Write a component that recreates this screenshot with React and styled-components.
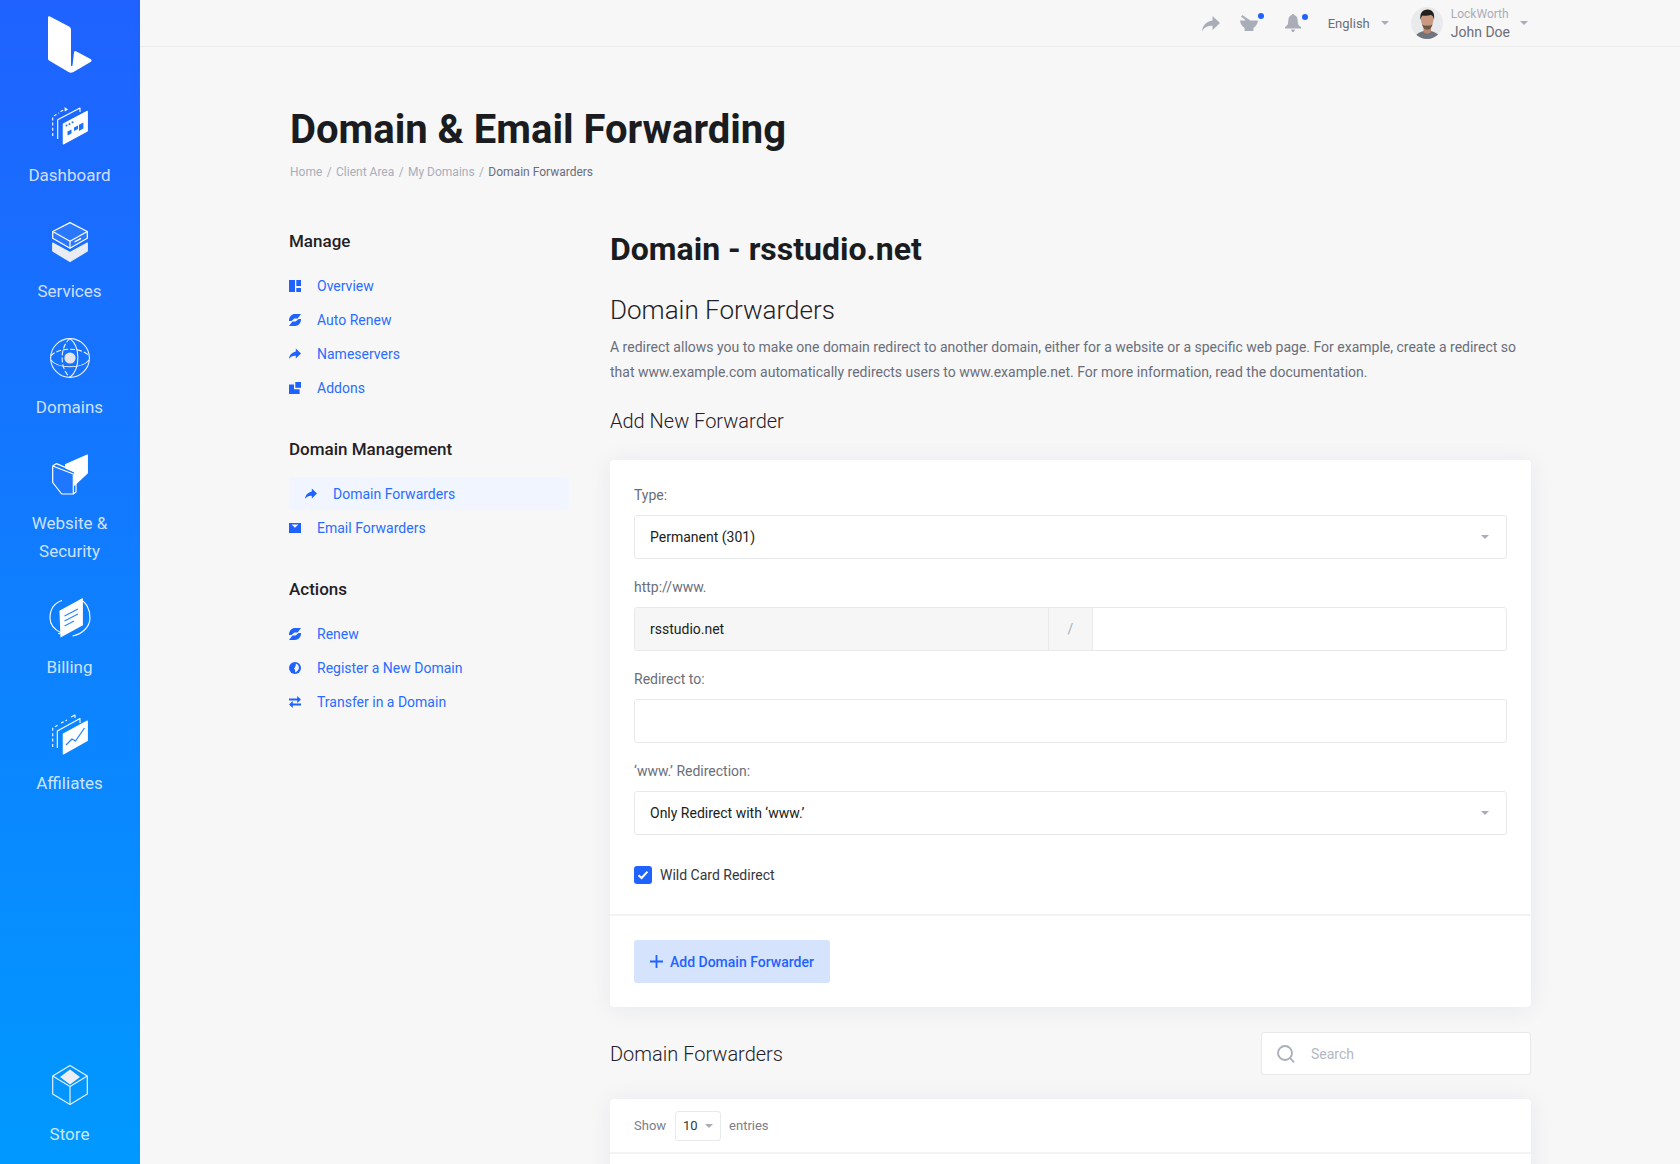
import React from 'react';
import styled, { createGlobalStyle } from 'styled-components';

const Global = createGlobalStyle`
  html, body { margin: 0; padding: 0; height: 1164px; overflow: hidden; background: #f7f7f8; }
  body { font-family: Roboto, "Liberation Sans", sans-serif; color: #1a1c20; }
  * { box-sizing: border-box; }
`;

const Shell = styled.div`display: flex; height: 1164px; overflow: hidden;`;
const Sidebar = styled.nav`
  width: 140px; flex: none; height: 1164px; display: flex; flex-direction: column; align-items: center;
  padding: 16px 0 16px; background: linear-gradient(180deg, #1f62ff 0%, #0099ff 100%);
`;
const LogoBox = styled.div`width: 46px; height: 57px; margin-bottom: 33px; svg { display: block; }`;
const SideList = styled.div`display: flex; flex-direction: column; gap: 33px; width: 100%; flex: 1;`;
const SideSpacer = styled.div`flex: 1;`;
const SideItem = styled.a`display: flex; flex-direction: column; align-items: center; width: 100%;`;
const SideIcon = styled.div`width: 40px; height: 40px; margin-bottom: 15px; svg { display: block; overflow: visible; }`;
const SideLabel = styled.span`font-size: 17px; line-height: 28px; color: rgba(255,255,255,.8); text-align: center; width: 100px; padding-right: 1px;`;

const Main = styled.div`flex: 1; min-width: 0; display: flex; flex-direction: column;`;
const Topbar = styled.header`
  height: 47px; flex: none; border-bottom: 1px solid #eeeeef; background: #f7f7f8; display: flex; align-items: center;
  justify-content: flex-end; padding-right: 152px; position: relative;
`;
const TopIcon = styled.div`position: relative; display: flex; margin-right: ${p => p.$mr}px; svg { display: block; }`;
const Dot = styled.i`position: absolute; width: 6px; height: 6px; border-radius: 50%; background: #1f62ff; top: ${p => p.$top}px; right: ${p => p.$right}px;`;
const Lang = styled.span`font-size: 13px; color: #6a6e79; margin-right: 11px;`;
const Caret = styled.i`display: block; width: 0; height: 0; border-left: 4px solid transparent; border-right: 4px solid transparent; border-top: 4px solid ${p => p.$c || '#a9adb8'};`;
const LangWrap = styled.div`display: flex; align-items: center; margin-right: 22px;`;
const Avatar = styled.div`width: 32px; height: 32px; border-radius: 50%; overflow: hidden; margin-right: 8px; svg { display: block; }`;
const User = styled.div`display: flex; flex-direction: column; margin-right: 10px; padding-top: 3px;`;
const Company = styled.span`font-size: 12px; line-height: 14px; color: #a9adb8;`;
const UserName = styled.span`font-size: 14px; line-height: 20px; color: #6a6e79; margin-top: 1px;`;

const Content = styled.main`padding: 59px 0 0 149px; width: 1391px;`;
const Title = styled.h1`margin: 0 0 0 1px; font-size: 40px; line-height: 48px; font-weight: 700; color: #1a1c20;`;
const Crumbs = styled.div`display: flex; gap: 4.4px; margin: 8px 0 0 1px; font-size: 12px; line-height: 20px; color: #a9adb8;`;
const CrumbNow = styled.span`color: #6a6e79;`;
const Columns = styled.div`display: grid; grid-template-columns: 280px 921px; column-gap: 41px; margin-top: 47px;`;
const Aside = styled.aside`display: flex; flex-direction: column; gap: 32px;`;
const NavGroup = styled.section`display: flex; flex-direction: column;`;
const NavTitle = styled.h3`margin: 0 0 16px; font-size: 17px; line-height: 24px; font-weight: 500; color: #1f2126;`;
const NavRow = styled.a`
  display: flex; align-items: center; height: 33px; margin-bottom: 1px; border-radius: 4px; font-size: 14px; color: #2a6cff;
  padding-left: ${p => (p.$active ? '16px' : '0')};
  background: ${p => (p.$active ? '#f0f5ff' : 'transparent')};
  svg { flex: none; margin-right: 16px; display: block; }
`;

const Right = styled.div`display: flex; flex-direction: column;`;
const H2 = styled.h2`margin: 0; font-size: 32px; line-height: 40px; font-weight: 700; color: #1a1c20;`;
const H3 = styled.h3`margin: 23px 0 0; font-size: 26px; line-height: 36px; font-weight: 300; color: #1f2126;`;
const Para = styled.p`margin: 7px 0 0; font-size: 14px; line-height: 25px; color: #6a6e79;`;
const H4 = styled.h4`margin: ${p => p.$mt ?? 22}px 0 0; font-size: 20px; line-height: 28px; font-weight: 300; color: #1f2126;`;
const Card = styled.div`background: #fff; border-radius: 4px; box-shadow: 0 2px 24px rgba(30,40,60,.07); margin-top: ${p => p.$mt}px;`;
const Fields = styled.div`padding: 25px 24px 0; display: flex; flex-direction: column;`;
const Label = styled.label`font-size: 14px; line-height: 20px; color: #6a6e79; margin-bottom: 10px;`;
const Field = styled.div`
  height: 44px; border: 1px solid #e8e9eb; border-radius: 3px; margin-bottom: 18px; display: flex; align-items: center;
  justify-content: space-between; padding: 0 ${p => (p.$select ? '17px' : '15px')} 0 15px; font-size: 14px; color: #1a1c20; background: #fff;
`;
const Group = styled.div`height: 44px; border: 1px solid #e8e9eb; border-radius: 3px; margin-bottom: 18px; display: flex; overflow: hidden; font-size: 14px;`;
const GroupStatic = styled.div`width: 413px; background: #f6f6f7; display: flex; align-items: center; padding-left: 15px; color: #1a1c20;`;
const GroupSlash = styled.div`width: 45px; background: #f6f6f7; border-left: 1px solid #e8e9eb; border-right: 1px solid #e8e9eb; display: flex; align-items: center; justify-content: center; color: #a9adb8;`;
const CheckRow = styled.div`display: flex; align-items: center; gap: 8px; margin-top: 13px; padding-bottom: 30px; font-size: 14px; color: #33363c;`;
const CheckBox = styled.span`width: 18px; height: 18px; border-radius: 3px; background: #1f62ff; display: flex; align-items: center; justify-content: center;`;
const Footer = styled.div`border-top: 2px solid #f3f3f4; padding: 24px;`;
const Button = styled.button`
  height: 43px; width: 196px; border: 0; border-radius: 3px; background: #d5e3fd; color: #1f62ff; font: 500 14px Roboto, sans-serif;
  display: flex; align-items: center; padding: 0 0 0 16px; gap: 7px;
`;
const SectionHead = styled.div`display: flex; align-items: center; justify-content: space-between; margin-top: 25px;`;
const Search = styled.div`
  width: 270px; height: 43px; background: #fff; border: 1px solid #e8e9eb; border-radius: 3px; display: flex; align-items: center;
  padding-left: 15px; gap: 16px; font-size: 14px; color: #b4b8c2;
`;
const ShowRow = styled.div`height: 55px; display: flex; align-items: center; padding-left: 24px; font-size: 13px; color: #7a7e89; border-bottom: 2px solid #f3f3f4;`;
const SmallSelect = styled.div`width: 46px; height: 30px; margin: 0 8px 0 9px; border: 1px solid #e8e9eb; border-radius: 3px; display: flex; align-items: center; gap: 7px; padding-left: 7px; color: #33363c;`;
const TableArea = styled.div`height: 400px;`;

const Svg = ({ children }) => <svg width="12" height="12" viewBox="0 0 12 12">{children}</svg>;
const B = '#1f62ff';

const IcOverview = () => <Svg><g fill={B}><rect width="6" height="12" /><rect x="7.3" width="4.7" height="6" /><rect x="7.3" y="8" width="4.7" height="4" /></g></Svg>;
const SYNC = 'M0 7C-.2 3 2.6 0 6 0H12L8.6 4.6H5.4L2.4 7Z';
const IcSync = () => <Svg><g fill={B}><path d={SYNC} /><path d={SYNC} transform="rotate(180 6 6)" /></g></Svg>;
const IcShare = () => <Svg><path fill={B} d="M6.8.6 12 5.6 6.8 10.4V7.8C4 7.6 1.8 8.4 0 10.8.4 7 3 4.2 6.8 3.4Z" /></Svg>;
const IcAddons = () => <Svg><g fill={B}><rect x="6.3" width="5.7" height="5.8" /><path d="M0 2.4h5v4.8h5.6V12H0Z" /></g></Svg>;
const IcMail = () => <Svg><rect y="1" width="12" height="10" fill={B} /><path d="M2.6 2.4h6.8L6 5.8Z" fill="#f7f7f8" /></Svg>;
const IcGlobe = () => <Svg><circle cx="6" cy="6" r="6" fill={B} /><path fill="#f7f7f8" d="M6.8 1.8C9 2.2 10.4 4.4 9.8 6.4 9.4 8 8 9.6 6 10.4 6.6 8.6 6 7.6 5 6.6 6 5.6 7 3.8 6.8 1.8Z" /></Svg>;
const IcTransfer = () => <Svg><g fill={B}><path d="M0 2.5h8.2V0L12 3.5 8.2 7V4.5H0Z" /><path d="M12 9.5H3.8V12L0 8.5 3.8 5V7.5H12Z" /></g></Svg>;

const W = '#ffffff';
const IcDashboard = () => (
  <svg width="40" height="40" viewBox="0 0 40 40" fill="none" stroke={W} strokeWidth="1.1" strokeLinejoin="round">
    <path d="M2.7 30V10.5L9 7" strokeDasharray="3 2.2" />
    <path d="M10.5 5.5 15 3.5" strokeDasharray="3 2" />
    <path d="M14.5 1 18 3.4 14.8 5.6Z" fill={W} stroke="none" />
    <path d="M7.7 33V13.7L30 2V6" />
    <path d="M13.3 18 37.3 5.3V25L13.3 38Z" fill={W} stroke={W} />
    <g fill="#1b72ff" stroke="none">
      <circle cx="16.5" cy="19.5" r="1" /><circle cx="19.5" cy="18" r="1" /><circle cx="22.5" cy="16.3" r="1" />
      <path d="M24 21.5 28 19.4V23L24 25Z" /><path d="M29 18.8 33.4 16.5V22.6L29 25Z" /><path d="M17.5 25.4 21.5 23.4V27.4L17.5 29.5Z" />
    </g>
  </svg>
);
const IcServices = () => (
  <svg width="40" height="40" viewBox="0 0 40 40" fill="none" stroke={W} strokeWidth="1.2" strokeLinejoin="round">
    <path d="M2.7 21 20 30.6 37.3 21V29L20 39.6 2.7 29Z" fill="#e9ecf2" stroke="#e9ecf2" />
    <path d="M20 .6 37.3 9.5V16.3L20 26.3 2.7 16.3V9.5Z" fill="#2a78ff" />
    <path d="M2.7 9.5 20 19.2 37.3 9.5M20 19.2V26.3" />
    <path d="M24.5 20 31 16.4" strokeWidth="1.4" />
  </svg>
);
const IcDomains = () => (
  <svg width="40" height="40" viewBox="0 0 40 40" fill="none" stroke="#eef2fa" strokeWidth="1.1">
    <circle cx="20" cy="20" r="19.4" />
    <circle cx="20" cy="20" r="5.6" fill="#e3e5ea" stroke="none" />
    <path d="M20 .6C10 8 9 30 20 39.4" strokeDasharray="5 2" />
    <path d="M20 .6C30 8 31 30 20 39.4" />
    <path d="M.8 18C8 9 32 9 39.2 18" strokeDasharray="5 2" />
    <path d="M.8 22C8 31 32 31 39.2 22" />
  </svg>
);
const IcWebsite = () => (
  <svg width="40" height="40" viewBox="0 0 40 40" fill="none" stroke={W} strokeWidth="1.2" strokeLinejoin="round">
    <path d="M15.7 10.5 37.3 1V19L24.5 31V18L15.7 14Z" fill={W} />
    <path d="M2.7 12 23.3 20V40H11.7L2.7 28.5Z" fill="#1f76ff" />
    <path d="M2.7 12 6.5 9.6 26 18V38L23.3 40" />
  </svg>
);
const IcBilling = () => (
  <svg width="40" height="40" viewBox="0 0 40 40" fill="none" stroke={W} strokeWidth="1.1">
    <path d="M12 2.5C4.5 5 0 10 0 20c0 7 5 12 11.5 15" />
    <path d="M8 35.5 12 36 12.5 31.5" />
    <path d="M30 1.5C36 4 40 11 40 20c0 9.5-9 16.5-17.5 18" />
    <path d="M10 13 32.3 1V27L11 38.6Z" fill={W} stroke={W} />
    <g stroke="#2a84ff" strokeWidth="1.2"><path d="M14.5 18 28 11" /><path d="M14.5 23 28 16" /><path d="M14.5 28 24 23" /></g>
  </svg>
);
const IcAffiliates = () => (
  <svg width="40" height="40" viewBox="0 0 40 40" fill="none" stroke={W} strokeWidth="1.1" strokeLinejoin="round">
    <path d="M2.7 33V14L8 11" strokeDasharray="3 2.4" />
    <path d="M11 9 17 6" strokeDasharray="3 2" />
    <path d="M21 3 25 1 25 4" />
    <path d="M7.3 34V17L30 4.5V9" />
    <path d="M13.3 20 37.3 7V26.6L13.3 40Z" fill={W} stroke={W} />
    <path d="M16 31 22 25 25.5 27 34.5 14" stroke="#2a84ff" strokeWidth="1.3" />
  </svg>
);
const IcStore = () => (
  <svg width="40" height="40" viewBox="0 0 40 40" fill="none" stroke="#e8f0fb" strokeWidth="1.2" strokeLinejoin="round">
    <path d="M20 .5 37.3 11V29L20 39.5 2.7 29V11Z" />
    <path d="M2.7 11 20 21.5 37.3 11M20 21.5V39.5" />
    <path d="M10 12 20 4.5 30 12 20 19.5Z" fill="#eceef2" stroke="none" />
  </svg>
);

const G = '#a9adb8';
const TopShare = () => <svg width="18" height="15" viewBox="0 0 18 15"><path fill={G} d="M10.5 0 18 7 10.5 14V9.8C6 9.6 2.8 11 0 15 .6 9.4 4.4 5.2 10.5 4.4Z" /></svg>;
const TopBasket = () => (
  <svg width="18" height="16" viewBox="0 0 18 16">
    <path fill={G} d="M0 5.5H5.6L3.6 3.6 1 1.8 2.4 0 6.2 2.8 10.4 5.5H18C17.6 9 15.6 11.8 13.4 13V16H4.6V13C2.4 11.8.4 9 0 5.5Z" />
  </svg>
);
const TopBell = () => (
  <svg width="16" height="18" viewBox="0 0 16 18">
    <path fill={G} d="M8 0C8.7 0 9.2.5 9.2 1.1 11.4 1.7 12.4 3.6 12.6 5.8L13 9.5C13.2 11 14.6 12 16 13V14.4H0V13C1.4 12 2.8 11 3 9.5L3.4 5.8C3.6 3.6 4.6 1.7 6.8 1.1 6.8.5 7.3 0 8 0Z" />
    <path fill={G} d="M6.2 15.4H9.8C9.8 16.8 9 18 8 18S6.2 16.8 6.2 15.4Z" />
  </svg>
);
const PortraitSvg = () => (
  <svg width="32" height="32" viewBox="0 0 32 32">
    <rect width="32" height="32" fill="#e9eaec" />
    <path d="M3 32C5 26 10 24.6 13 24 15 26 18 26 20 24 24 25 28 27 30 32Z" fill="#70747c" />
    <path d="M12.5 18H20V25C18 27 14.5 27 12.5 25Z" fill="#b98a70" />
    <ellipse cx="16.2" cy="13" rx="6.2" ry="8" fill="#c99a80" />
    <path d="M9.4 13C8.6 6 11.5 2.5 16.5 2.5 21.5 2.5 24 6 23 13 22.4 10 21.6 8.6 20 8 17 9 13 9 11.4 8.4 10.4 9.6 10 11 9.4 13Z" fill="#23201e" />
    <path d="M11 17C12 21.5 14 22.5 16.2 22.5 18.5 22.5 20.5 21.5 21.6 17 20.5 19 18 18.6 16.2 18.6 14.5 18.6 12 19 11 17Z" fill="#6d5548" />
  </svg>
);

const sideTop = [
  ['Dashboard', IcDashboard], ['Services', IcServices], ['Domains', IcDomains],
  ['Website & Security', IcWebsite], ['Billing', IcBilling], ['Affiliates', IcAffiliates],
];
const navGroups = [
  ['Manage', [['Overview', IcOverview], ['Auto Renew', IcSync], ['Nameservers', IcShare], ['Addons', IcAddons]]],
  ['Domain Management', [['Domain Forwarders', IcShare, true], ['Email Forwarders', IcMail]]],
  ['Actions', [['Renew', IcSync], ['Register a New Domain', IcGlobe], ['Transfer in a Domain', IcTransfer]]],
];

export default function App() {
  return (
    <>
      <Global />
      <Shell>
        <Sidebar>
          <LogoBox>
            <svg width="46" height="57" viewBox="0 0 46 57" fill="#fff">
              <path d="M1 1.5C1 .5 2 0 3 .5L22 10.5C23 11 24 12 24 13.5V49C24 50.5 25 50.5 25.5 49.5L27 36.5C27.2 35 28 34.5 29.5 35.5L43.5 43C45 44 45 45 43.5 46L26.5 56C24.5 57 23 57 21.5 56L2 44.5C1.4 44 1 43.5 1 42.5Z" />
            </svg>
          </LogoBox>
          <SideList>
            {sideTop.map(([label, Ic]) => (
              <SideItem key={label}><SideIcon><Ic /></SideIcon><SideLabel>{label}</SideLabel></SideItem>
            ))}
            <SideSpacer />
            <SideItem><SideIcon><IcStore /></SideIcon><SideLabel>Store</SideLabel></SideItem>
          </SideList>
        </Sidebar>
        <Main>
          <Topbar>
            <TopIcon $mr={20}><TopShare /></TopIcon>
            <TopIcon $mr={27}><TopBasket /><Dot $top={-2} $right={-6} /></TopIcon>
            <TopIcon $mr={27}><TopBell /><Dot $top={0} $right={-7} /></TopIcon>
            <LangWrap><Lang>English</Lang><Caret /></LangWrap>
            <Avatar><PortraitSvg /></Avatar>
            <User><Company>LockWorth</Company><UserName>John Doe</UserName></User>
            <Caret />
          </Topbar>
          <Content>
            <Title>Domain &amp; Email Forwarding</Title>
            <Crumbs>
              <span>Home</span><span>/</span><span>Client Area</span><span>/</span><span>My Domains</span><span>/</span>
              <CrumbNow>Domain Forwarders</CrumbNow>
            </Crumbs>
            <Columns>
              <Aside>
                {navGroups.map(([title, rows]) => (
                  <NavGroup key={title}>
                    <NavTitle>{title}</NavTitle>
                    {rows.map(([label, Ic, active]) => (
                      <NavRow key={label} $active={active}><Ic />{label}</NavRow>
                    ))}
                  </NavGroup>
                ))}
              </Aside>
              <Right>
                <H2>Domain - rsstudio.net</H2>
                <H3>Domain Forwarders</H3>
                <Para>A redirect allows you to make one domain redirect to another domain, either for a website or a specific web page. For example, create a redirect so that www.example.com automatically redirects users to www.example.net. For more information, read the documentation.</Para>
                <H4>Add New Forwarder</H4>
                <Card $mt={25}>
                  <Fields>
                    <Label>Type:</Label>
                    <Field $select>Permanent (301)<Caret /></Field>
                    <Label>http://www.</Label>
                    <Group><GroupStatic>rsstudio.net</GroupStatic><GroupSlash>/</GroupSlash></Group>
                    <Label>Redirect to:</Label>
                    <Field />
                    <Label>‘www.’ Redirection:</Label>
                    <Field $select>Only Redirect with ‘www.’<Caret /></Field>
                    <CheckRow>
                      <CheckBox>
                        <svg width="12" height="10" viewBox="0 0 12 10"><path d="M1.5 5.2 4.6 8 10.5 1.6" fill="none" stroke="#fff" strokeWidth="2" /></svg>
                      </CheckBox>
                      Wild Card Redirect
                    </CheckRow>
                  </Fields>
                  <Footer>
                    <Button>
                      <svg width="13" height="13" viewBox="0 0 13 13"><path d="M6.5 0v13M0 6.5h13" stroke="#1f62ff" strokeWidth="1.8" /></svg>
                      Add Domain Forwarder
                    </Button>
                  </Footer>
                </Card>
                <SectionHead>
                  <H4 $mt={0}>Domain Forwarders</H4>
                  <Search>
                    <svg width="18" height="18" viewBox="0 0 18 18" fill="none" stroke="#a9adb8" strokeWidth="1.8"><circle cx="8" cy="8" r="7" /><path d="M13 13l4 4.4" /></svg>
                    Search
                  </Search>
                </SectionHead>
                <Card $mt={24}>
                  <ShowRow>Show<SmallSelect>10<Caret /></SmallSelect>entries</ShowRow>
                  <TableArea />
                </Card>
              </Right>
            </Columns>
          </Content>
        </Main>
      </Shell>
    </>
  );
}
